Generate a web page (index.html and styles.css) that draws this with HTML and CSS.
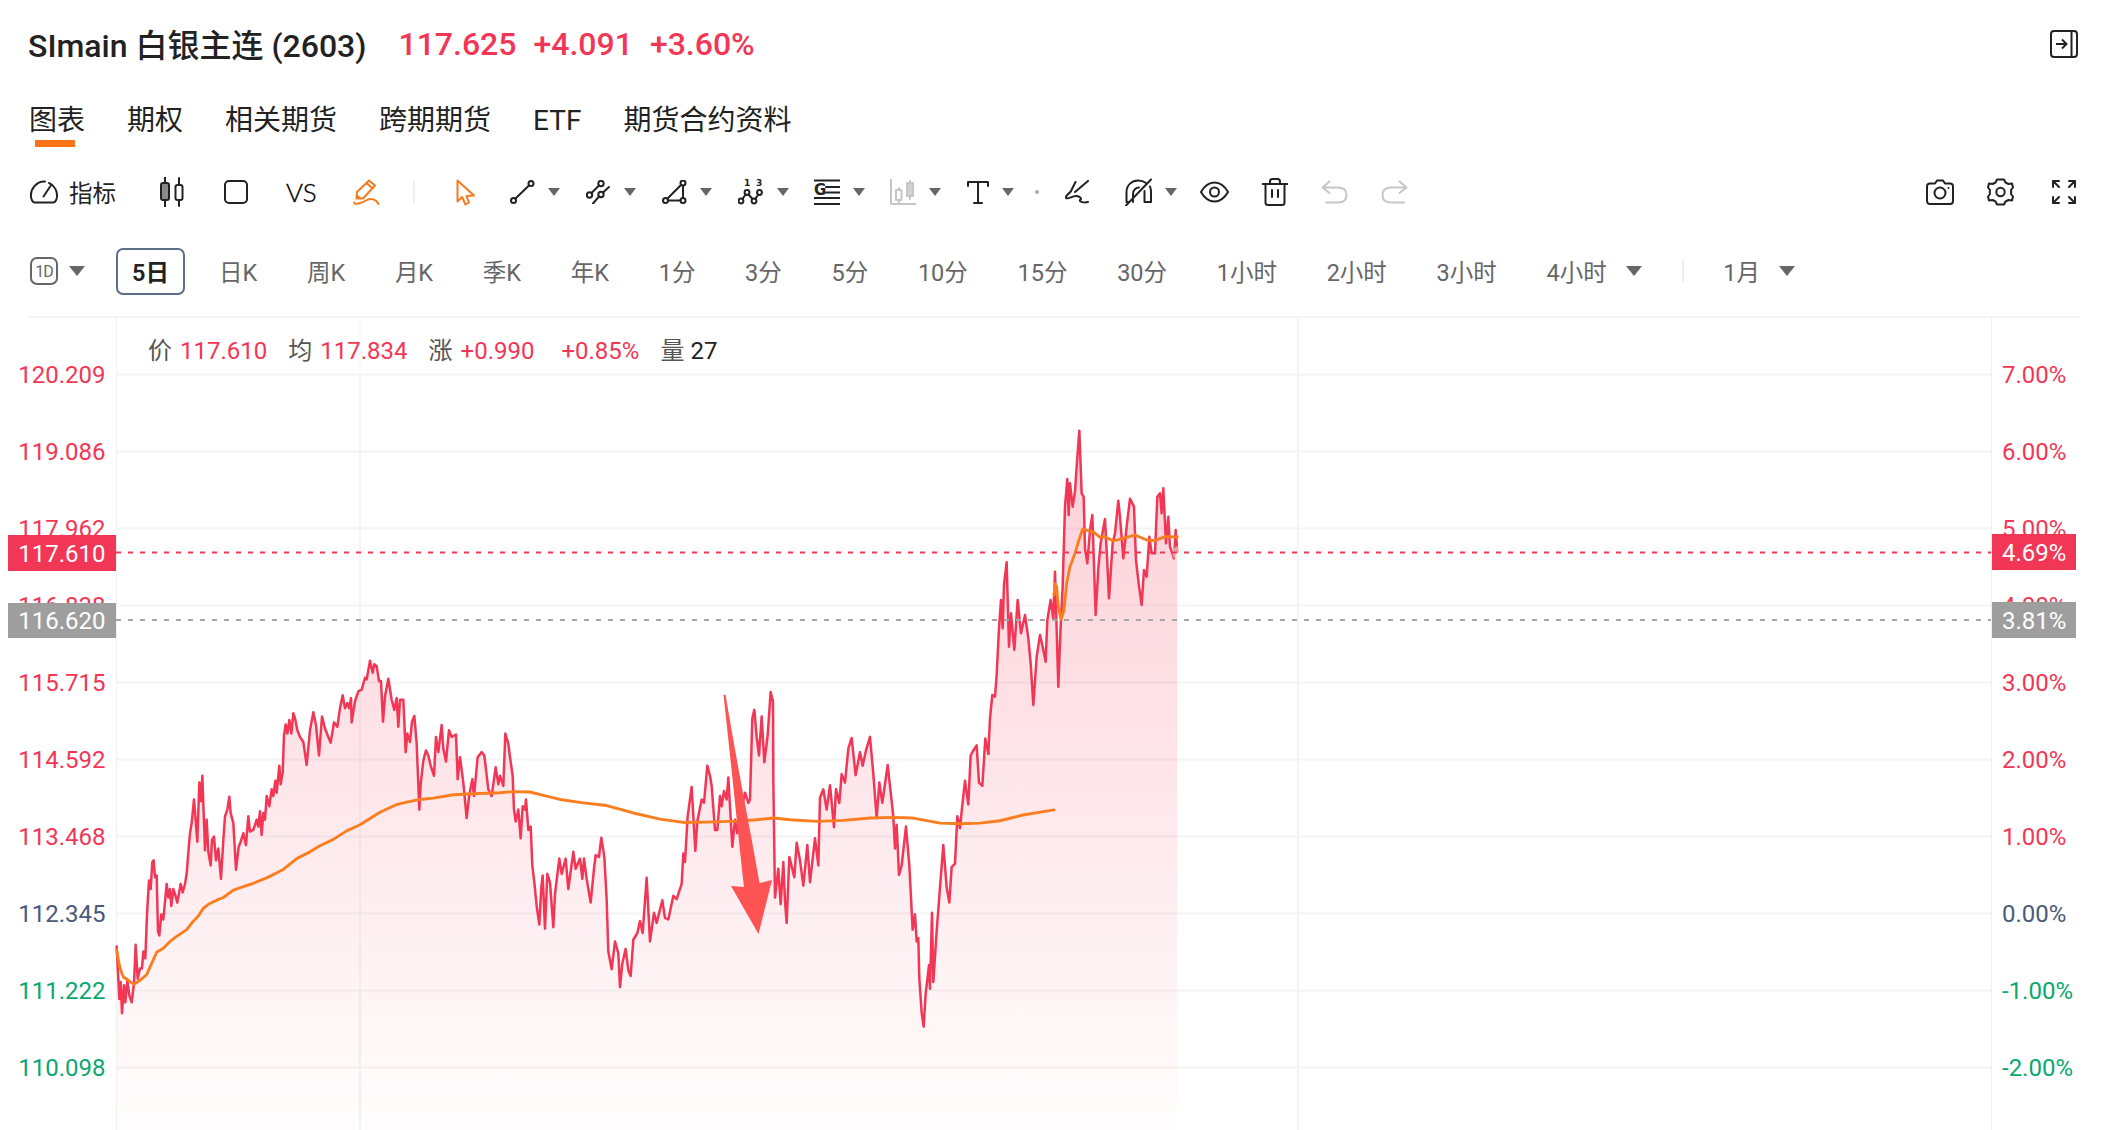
FILE: index.html
```html
<!DOCTYPE html>
<html lang="zh-CN">
<head>
<meta charset="utf-8">
<title>SImain 白银主连 (2603)</title>
<link rel="stylesheet" href="styles.css">
</head>
<body>
<div class="page">
  <header class="head">
    <h1 class="title">SImain 白银主连 (2603)</h1>
    <div class="quote"><span>117.625</span><span>+4.091</span><span>+3.60%</span></div>
    <svg class="exit" width="28" height="28" viewBox="0 0 28 28"><rect x="1" y="1" width="26" height="26" rx="3"/><path d="M21.500 1V27M6 14H16M12 9.500L16.500 14L12 18.500"/></svg>
  </header>

  <nav class="tabs">
    <a class="tab tab-on">图表</a><a class="tab">期权</a><a class="tab">相关期货</a><a class="tab">跨期期货</a><a class="tab">ETF</a><a class="tab">期货合约资料</a>
  </nav>

  <div class="tools">
    <svg class="ico g-1" width="30" height="24" viewBox="0 0 30 24"><path d="M6 22.500H24C26 22.500 27 21 27.800 18C29 11 25 5 20 3M6 22.500C4 22.500 3 21 2.200 18C0.500 9 8 1 16 1.500M14.500 16.500L21.500 6"/></svg>
    <span class="ind">指标</span>
    <svg class="ico g-candle" width="24" height="30" viewBox="0 0 24 30"><path d="M5 0V30M19 1V29"/><rect x="1" y="6" width="8" height="17" rx="2" fill="#8a8a8a"/><rect x="15.500" y="8" width="7" height="15" rx="2" fill="#fff"/></svg>
    <svg class="ico g-square" width="24" height="24" viewBox="0 0 24 24"><rect x="1" y="1" width="22" height="22" rx="4"/></svg>
    <span class="vs">VS</span>
    <svg class="ico ico-o g-pen" width="26" height="28" viewBox="0 0 26 28"><path d="M4 14L16 2.500L22 7.500L10 20.500L3.500 20.500ZM13.500 5L19.500 10.500M4 17.500L7.500 20.500M1 24.500C1 27.500 9 25 14 22C18 20 23 21 25.500 26"/></svg>
    <i class="sep"></i>
    <svg class="ico ico-o g-cursor" width="19" height="27" viewBox="0 0 19 27"><path d="M1.500 1.500V22.500L6 18L9.500 25.500L13 23.500L10.500 17L18 16.500Z"/></svg>

    <div class="dd dd-first"><svg class="ico" width="25" height="24" viewBox="0 0 25 24"><circle cx="21" cy="3.500" r="2.500"/><circle cx="3.500" cy="20.500" r="2.500"/><path d="M19 5.500L5.500 18.500"/></svg><i class="caret"></i></div>
    <div class="dd"><svg class="ico" width="25" height="24" viewBox="0 0 25 24"><circle cx="15" cy="3.500" r="2.700"/><circle cx="3.500" cy="15" r="2.700"/><circle cx="15" cy="14.500" r="2.700"/><path d="M13 5.500L5.500 13M7 23.500L13 16.500M17 12.500L23 7"/></svg><i class="caret"></i></div>
    <div class="dd"><svg class="ico" width="25" height="24" viewBox="0 0 25 24"><circle cx="3.500" cy="20.500" r="2.500"/><circle cx="21" cy="3" r="2.500"/><circle cx="21" cy="20.500" r="2.500"/><path d="M5.500 18.500L19 5M21 5.500V18M6 20.500H18.500"/></svg><i class="caret"></i></div>
    <div class="dd"><svg class="ico" width="26" height="26" viewBox="0 0 26 26"><text class="ico-num" x="6" y="7">1</text><text class="ico-num" x="18" y="7">3</text><circle cx="3" cy="22" r="2.400"/><circle cx="9" cy="13.500" r="2.400"/><circle cx="16" cy="22" r="2.400"/><circle cx="21.500" cy="13.500" r="2.400"/><path d="M4.500 20L7.500 15.500M10.500 15.500L14.500 20M17.300 20L20.300 15.500"/></svg><i class="caret"></i></div>
    <div class="dd"><svg class="ico" width="26" height="26" viewBox="0 0 26 26"><path d="M0 1.500H26M0 19H26M0 25H26M12 8H26M12 13.500H26"/><text class="ico-g" x="0" y="15.500">G</text></svg><i class="caret"></i></div>
    <div class="dd"><svg class="ico ico-l" width="26" height="26" viewBox="0 0 26 26"><path d="M1 0V25H26M9 9V24M20 2V20"/><rect x="6" y="11" width="5.500" height="10" fill="#fff"/><rect x="17" y="4" width="6" height="13" fill="#d0d0d0"/></svg><i class="caret"></i></div>
    <div class="dd dd-t"><svg class="ico" width="22" height="24" viewBox="0 0 22 24"><path d="M1 6V2H21V6M11 2V23M7 23H15"/></svg><i class="caret"></i></div>
    <i class="dot"></i>
    <svg class="ico g-scribble" width="25" height="24" viewBox="0 0 25 24"><path d="M23 1L10 12M10.500 2L6.500 10C6 13 0 15 1 18C3 20 8 15 12 16C16 17 17 19 15 20C14 22 19 23 23 22"/></svg>
    <div class="dd dd-h"><svg class="ico" width="27" height="28" viewBox="0 0 27 28"><path d="M1.500 24V14C1.500 7 7 2.500 13 2.500C16 2.500 19 3.500 21 5M8 24V16C8 12 11 9.500 14 9.500M19.500 13V24H26V13C26 11.500 25.500 10 25 8.500M1 27.500L26 1.500M1.500 24H3"/></svg><i class="caret"></i></div>
    <svg class="ico g-eye" width="29" height="22" viewBox="0 0 29 22"><path d="M1 11C5 4 9 1.500 14.500 1.500C20 1.500 24 4 28 11C24 18 20 20.500 14.500 20.500C9 20.500 5 18 1 11Z"/><circle cx="14.500" cy="11" r="4.500"/></svg>
    <svg class="ico g-trash" width="26" height="28" viewBox="0 0 26 28"><path d="M0.500 6H25.500M3.500 6V24.500C3.500 26 4.500 27 6 27H20C21.500 27 22.500 26 22.500 24.500V6M8 6V3.500C8 2 9 1 10.500 1H15.500C17 1 18 2 18 3.500V6M10 12V19M16 12V19"/></svg>
    <svg class="ico ico-l g-undo" width="27" height="24" viewBox="0 0 27 24"><path d="M8.500 1.500L1.500 7.500L8.500 13M1.500 7.500H17C22 7.500 25.500 10 25.500 15C25.500 20 22 22.500 17 22.500H5"/></svg>
    <svg class="ico ico-l g-redo" width="27" height="24" viewBox="0 0 27 24"><path d="M18.500 1.500L25.500 7.500L18.500 13M25.500 7.500H10C5 7.500 1.500 10 1.500 15C1.500 20 5 22.500 10 22.500H23"/></svg>
    <svg class="ico g-camera" width="28" height="26" viewBox="0 0 28 26"><path d="M9 4.500L11 1.500H17L19 4.500H24C25.800 4.500 27 5.700 27 7.500V22C27 23.800 25.800 25 24 25H4C2.200 25 1 23.800 1 22V7.500C1 5.700 2.200 4.500 4 4.500Z"/><circle cx="14" cy="14" r="5.500"/><circle class="solid" cx="22.500" cy="9" r="1"/></svg>
    <svg class="ico g-gear" width="27" height="28" viewBox="0 0 27 28"><path d="M10 1.500H17L18.500 4.500C19.500 5 20.500 5.500 21.500 6L25 5.500L26 9.500L24 12C24.200 13 24.200 15 24 16L26 18.500L25 22.500L21.500 22C20.500 22.500 19.500 23 18.500 23.500L17 26.500H10L8.500 23.500C7.500 23 6.500 22.500 5.500 22L2 22.500L1 18.500L3 16C2.800 15 2.800 13 3 12L1 9.500L2 5.500L5.500 6C6.500 5.500 7.500 5 8.500 4.500Z"/><circle cx="13.500" cy="14" r="4.200"/></svg>
    <svg class="ico g-full" width="24" height="24" viewBox="0 0 24 24"><path d="M1 7V1H7M1 1L7 7M17 1H23V7M23 1L17 7M1 17V23H7M1 23L7 17M23 17V23H17M23 23L17 17"/></svg>
  </div>

  <div class="periods">
    <div class="p-type"><svg class="ico-1d" width="28" height="28" viewBox="0 0 28 28"><rect x="1" y="1" width="26" height="26" rx="6"/><text x="14" y="19.500">1D</text></svg><i class="caret caret-t"></i></div>
    <a class="p p-on">5日</a>
    <a class="p">日K</a><a class="p">周K</a><a class="p">月K</a><a class="p">季K</a><a class="p">年K</a><a class="p">1分</a><a class="p">3分</a><a class="p">5分</a><a class="p">10分</a><a class="p">15分</a><a class="p">30分</a><a class="p">1小时</a><a class="p">2小时</a><a class="p">3小时</a>
    <a class="p p-dd">4小时<i class="caret caret-t"></i></a>
    <i class="sep sep-p"></i>
    <a class="p p-dd">1月<i class="caret caret-t"></i></a>
  </div>

  <section class="chart">
    <svg class="plot" width="2110" height="814" viewBox="0 316 2110 814">
      <defs>
        <linearGradient id="area" gradientUnits="userSpaceOnUse" x1="0" y1="420" x2="0" y2="1130">
          <stop offset="0" stop-color="#f23655" stop-opacity=".24"/>
          <stop offset="1" stop-color="#f23655" stop-opacity=".01"/>
        </linearGradient>
        <clipPath id="areaClip">
          <path transform="translate(0 600) scale(.33333 .33806)" d="M350 1568V1025L358 1180 362 1130 366 1222 372 1140 376 1190 382 1125 388 1170 395 1190 402 1135 407 1020 413 1120 420 1090 426 1090 430 1040 436 1060 441 930 447 830 452 855 457 775 461 770 465 820 470 815 474 980 478 992 484 930 490 945 500 840 505 880 510 855 514 905 520 855 525 870 532 895 542 840 548 865 555 840 560 810 566 735 570 690 575 660 582 590 592 715 598 540 603 595 607 520 612 660 615 740 620 650 625 745 632 785 636 710 642 700 648 770 655 735 663 825 670 710 675 640 682 620 688 582 692 630 700 660 708 798 716 730 722 715 730 690 738 725 745 640 750 685 760 680 770 650 775 670 780 625 785 695 790 630 795 650 800 580 808 610 815 560 820 580 826 535 830 570 838 490 842 545 848 510 852 400 857 368 862 395 868 355 874 395 880 335 885 350 892 385 900 405 910 420 920 488 930 385 940 332 948 370 957 460 966 345 975 380 985 405 992 422 1002 362 1012 375 1020 320 1028 282 1035 320 1042 305 1048 320 1053 290 1055 362 1065 300 1075 270 1085 265 1095 230 1100 235 1110 180 1118 215 1123 190 1130 195 1137 240 1143 240 1149 360 1155 285 1165 233 1175 295 1183 325 1190 290 1195 375 1200 295 1210 295 1217 450 1222 395 1230 420 1236 360 1243 343 1250 425 1258 620 1262 545 1270 475 1278 445 1285 460 1292 490 1302 520 1308 405 1315 450 1325 370 1330 440 1338 478 1347 385 1355 405 1368 398 1373 530 1380 465 1390 540 1400 645 1408 575 1417 530 1422 580 1433 465 1445 450 1453 460 1465 560 1475 580 1487 495 1495 545 1500 520 1510 550 1516 395 1525 425 1530 465 1538 520 1542 620 1547 655 1555 620 1562 705 1568 610 1575 620 1578 590 1585 680 1592 670 1597 785 1603 835 1610 905 1618 960 1624 850 1628 815 1635 972 1642 810 1650 835 1660 968 1665 870 1678 765 1685 810 1697 765 1705 855 1720 745 1727 795 1740 765 1747 825 1752 765 1760 825 1772 895 1782 795 1787 755 1797 760 1804 703 1813 760 1820 885 1825 1040 1835 1092 1845 1010 1855 1045 1860 1145 1867 1075 1877 1032 1885 1095 1892 1112 1900 1005 1912 985 1920 950 1928 985 1940 822 1950 1010 1962 925 1970 955 1987 888 1995 940 2005 945 2020 875 2030 885 2045 840 2050 750 2055 775 2063 640 2075 553 2086 742 2092 655 2105 590 2112 600 2122 490 2130 520 2135 550 2145 680 2152 680 2160 580 2165 610 2172 565 2180 590 2185 525 2197 730 2205 650 2212 690 2220 640 2235 570 2245 600 2250 590 2257 350 2263 325 2270 405 2277 460 2285 345 2293 480 2303 400 2312 272 2319 300 2320 530 2325 880 2335 795 2342 900 2350 775 2355 890 2360 955 2368 760 2383 820 2390 718 2400 770 2410 845 2422 725 2430 835 2445 705 2455 785 2460 585 2470 560 2480 620 2490 548 2502 672 2508 560 2518 600 2525 515 2535 540 2545 440 2555 408 2567 518 2580 450 2588 490 2598 445 2610 405 2620 515 2630 645 2638 540 2647 600 2663 488 2680 640 2685 735 2690 665 2697 813 2705 785 2718 670 2728 785 2738 975 2745 930 2750 1010 2755 1000 2758 1120 2765 1220 2771 1262 2777 1165 2787 1080 2790 1150 2796 925 2800 1130 2810 980 2820 850 2830 725 2840 850 2848 895 2855 790 2865 780 2872 640 2880 675 2885 625 2895 535 2905 605 2912 460 2920 445 2930 430 2937 540 2947 550 2956 410 2965 455L2970 1568Z"/>
          <path transform="translate(0 600) scale(.33333)" d="M2962 1590V480L2965 461 2970 355 2977 285 2985 290 2990 225 2997 85 3003 0 3008 85 3012 -45 3020 -113 3027 140 3033 40 3043 150 3053 0 3063 100 3075 45 3085 115 3092 190 3100 315 3110 170 3120 105 3128 140 3137 185 3142 60 3152 0 3160 55 3165 -85 3175 260 3182 80 3188 -40 3195 -280 3202 -363 3206 -255 3210 -350 3218 -280 3225 -325 3230 -400 3238 -508 3245 -320 3251 -310 3255 -155 3262 -110 3270 -210 3277 -255 3287 45 3295 -95 3302 -170 3315 -243 3322 -110 3327 -5 3338 -170 3345 -200 3355 -298 3360 -250 3370 -125 3380 -220 3390 -304 3402 -280 3408 -120 3416 -50 3425 15 3432 -90 3440 -70 3448 -190 3455 -140 3465 -140 3472 -310 3480 -320 3485 -260 3490 -335 3498 -170 3505 -250 3510 -160 3522 -125 3527 -210 3532 -145V1590Z"/>
        </clipPath>
      </defs>
      <path class="grid" d="M28 317H2080M116 374.500H1991M116 451.500H1991M116 528.500H1991M116 605.500H1991M116 682.500H1991M116 759.500H1991M116 836.500H1991M116 913.500H1991M116 990.500H1991M116 1067.500H1991M360 374V1130M1298 316V1130"/>
      <path class="grid-thin" d="M116.500 317V1130M1991.500 317V1130"/>
      <path class="grid-faint" d="M360 318V374"/>

      <g class="tick">
        <text class="up" x="105.500" y="383">120.209</text>
        <text class="up" x="105.500" y="460">119.086</text>
        <text class="up" x="105.500" y="537">117.962</text>
        <text class="up" x="105.500" y="614">116.838</text>
        <text class="up" x="105.500" y="691">115.715</text>
        <text class="up" x="105.500" y="768">114.592</text>
        <text class="up" x="105.500" y="845">113.468</text>
        <text class="flat" x="105.500" y="922">112.345</text>
        <text class="down" x="105.500" y="999">111.222</text>
        <text class="down" x="105.500" y="1076">110.098</text>
      </g>
      <g class="tick tick-r">
        <text class="up" x="2002" y="383">7.00%</text>
        <text class="up" x="2002" y="460">6.00%</text>
        <text class="up" x="2002" y="537">5.00%</text>
        <text class="up" x="2002" y="614">4.00%</text>
        <text class="up" x="2002" y="691">3.00%</text>
        <text class="up" x="2002" y="768">2.00%</text>
        <text class="up" x="2002" y="845">1.00%</text>
        <text class="flat" x="2002" y="922">0.00%</text>
        <text class="down" x="2002" y="999">-1.00%</text>
        <text class="down" x="2002" y="1076">-2.00%</text>
      </g>

      <rect class="area" x="116" y="316" width="1070" height="814" clip-path="url(#areaClip)"/>
      <g transform="translate(0 600) scale(.33333 .33806)">
        <path class="price" d="M350 1025L358 1180 362 1130 366 1222 372 1140 376 1190 382 1125 388 1170 395 1190 402 1135 407 1020 413 1120 420 1090 426 1090 430 1040 436 1060 441 930 447 830 452 855 457 775 461 770 465 820 470 815 474 980 478 992 484 930 490 945 500 840 505 880 510 855 514 905 520 855 525 870 532 895 542 840 548 865 555 840 560 810 566 735 570 690 575 660 582 590 592 715 598 540 603 595 607 520 612 660 615 740 620 650 625 745 632 785 636 710 642 700 648 770 655 735 663 825 670 710 675 640 682 620 688 582 692 630 700 660 708 798 716 730 722 715 730 690 738 725 745 640 750 685 760 680 770 650 775 670 780 625 785 695 790 630 795 650 800 580 808 610 815 560 820 580 826 535 830 570 838 490 842 545 848 510 852 400 857 368 862 395 868 355 874 395 880 335 885 350 892 385 900 405 910 420 920 488 930 385 940 332 948 370 957 460 966 345 975 380 985 405 992 422 1002 362 1012 375 1020 320 1028 282 1035 320 1042 305 1048 320 1053 290 1055 362 1065 300 1075 270 1085 265 1095 230 1100 235 1110 180 1118 215 1123 190 1130 195 1137 240 1143 240 1149 360 1155 285 1165 233 1175 295 1183 325 1190 290 1195 375 1200 295 1210 295 1217 450 1222 395 1230 420 1236 360 1243 343 1250 425 1258 620 1262 545 1270 475 1278 445 1285 460 1292 490 1302 520 1308 405 1315 450 1325 370 1330 440 1338 478 1347 385 1355 405 1368 398 1373 530 1380 465 1390 540 1400 645 1408 575 1417 530 1422 580 1433 465 1445 450 1453 460 1465 560 1475 580 1487 495 1495 545 1500 520 1510 550 1516 395 1525 425 1530 465 1538 520 1542 620 1547 655 1555 620 1562 705 1568 610 1575 620 1578 590 1585 680 1592 670 1597 785 1603 835 1610 905 1618 960 1624 850 1628 815 1635 972 1642 810 1650 835 1660 968 1665 870 1678 765 1685 810 1697 765 1705 855 1720 745 1727 795 1740 765 1747 825 1752 765 1760 825 1772 895 1782 795 1787 755 1797 760 1804 703 1813 760 1820 885 1825 1040 1835 1092 1845 1010 1855 1045 1860 1145 1867 1075 1877 1032 1885 1095 1892 1112 1900 1005 1912 985 1920 950 1928 985 1940 822 1950 1010 1962 925 1970 955 1987 888 1995 940 2005 945 2020 875 2030 885 2045 840 2050 750 2055 775 2063 640 2075 553 2086 742 2092 655 2105 590 2112 600 2122 490 2130 520 2135 550 2145 680 2152 680 2160 580 2165 610 2172 565 2180 590 2185 525 2197 730 2205 650 2212 690 2220 640 2235 570 2245 600 2250 590 2257 350 2263 325 2270 405 2277 460 2285 345 2293 480 2303 400 2312 272 2319 300 2320 530 2325 880 2335 795 2342 900 2350 775 2355 890 2360 955 2368 760 2383 820 2390 718 2400 770 2410 845 2422 725 2430 835 2445 705 2455 785 2460 585 2470 560 2480 620 2490 548 2502 672 2508 560 2518 600 2525 515 2535 540 2545 440 2555 408 2567 518 2580 450 2588 490 2598 445 2610 405 2620 515 2630 645 2638 540 2647 600 2663 488 2680 640 2685 735 2690 665 2697 813 2705 785 2718 670 2728 785 2738 975 2745 930 2750 1010 2755 1000 2758 1120 2765 1220 2771 1262 2777 1165 2787 1080 2790 1150 2796 925 2800 1130 2810 980 2820 850 2830 725 2840 850 2848 895 2855 790 2865 780 2872 640 2880 675 2885 625 2895 535 2905 605 2912 460 2920 445 2930 430 2937 540 2947 550 2956 410 2965 455"/>
        <path class="avg" d="M350 1035C356 1075 362 1100 370 1115L385 1125 402 1137 420 1125 440 1108 455 1075 470 1042 490 1030 510 1010 530 995 560 975 580 950 595 935 610 912 625 900 650 888 670 880 700 858 730 848 760 838 800 822 850 797 890 765 930 745 960 727 1000 708 1040 683 1080 665 1140 628 1190 605 1220 598 1260 590 1300 586 1360 576 1420 573 1500 570 1540 567 1590 568 1630 578 1680 590 1750 600 1820 608 1900 630 1980 648 2050 658 2120 657 2210 654 2270 650 2320 645 2370 650 2450 655 2530 652 2610 645 2680 643 2740 645 2820 660 2880 662 2940 660 3000 653 3069 636 3162 621"/>
      </g>
      <g transform="translate(0 600) scale(.33333)">
        <path class="price" d="M2965 461L2970 355 2977 285 2985 290 2990 225 2997 85 3003 0 3008 85 3012 -45 3020 -113 3027 140 3033 40 3043 150 3053 0 3063 100 3075 45 3085 115 3092 190 3100 315 3110 170 3120 105 3128 140 3137 185 3142 60 3152 0 3160 55 3165 -85 3175 260 3182 80 3188 -40 3195 -280 3202 -363 3206 -255 3210 -350 3218 -280 3225 -325 3230 -400 3238 -508 3245 -320 3251 -310 3255 -155 3262 -110 3270 -210 3277 -255 3287 45 3295 -95 3302 -170 3315 -243 3322 -110 3327 -5 3338 -170 3345 -200 3355 -298 3360 -250 3370 -125 3380 -220 3390 -304 3402 -280 3408 -120 3416 -50 3425 15 3432 -90 3440 -70 3448 -190 3455 -140 3465 -140 3472 -310 3480 -320 3485 -260 3490 -335 3498 -170 3505 -250 3510 -160 3522 -125 3527 -210 3532 -145"/>
        <path class="avg" d="M3162 -15L3165 -50 3170 -40 3175 20 3183 58 3192 30 3200 -50 3210 -100 3225 -140 3237 -180 3248 -213 3265 -208 3282 -203 3300 -188 3315 -190 3340 -177 3370 -185 3405 -195 3440 -180 3465 -178 3495 -190 3532 -189"/>
      </g>

      <circle class="pulse" cx="1179" cy="553" r="7"/>
      <path class="arrow" d="M723.500 695L725.500 694.500C733 740 743 793 751 836L759.500 883L772 880L758.500 934L731 886L744 887C738 833 732 772 723.500 695Z"/>

      <path class="dash-red" d="M116 552.500H1991"/>
      <path class="dash-gray" d="M116 620H1991"/>
      <rect class="tag-red" x="8" y="535" width="108" height="36"/>
      <rect class="tag-gray" x="8" y="603" width="108" height="35"/>
      <rect class="tag-red" x="1992" y="534" width="84" height="36"/>
      <rect class="tag-gray" x="1992" y="602" width="84" height="36"/>
      <g class="tick tick-tag">
        <text class="end" x="105.500" y="561.500">117.610</text>
        <text class="end" x="105.500" y="629">116.620</text>
        <text x="2002" y="561">4.69%</text>
        <text x="2002" y="629">3.81%</text>
      </g>
    </svg>
    <div class="legend">
      <span class="lg"><b>价</b><em>117.610</em></span>
      <span class="lg"><b>均</b><em>117.834</em></span>
      <span class="lg"><b>涨</b><em>+0.990</em></span>
      <span class="lg lg-pct"><em>+0.85%</em></span>
      <span class="lg"><b>量</b><em class="vol">27</em></span>
    </div>
  </section>
</div>
</body>
</html>
```

FILE: styles.css
```css
* { box-sizing: border-box; }
html, body { margin: 0; padding: 0; background: #fff; }
.page {
  width: 2110px;
  height: 1130px;
  overflow: hidden;
  font-family: Roboto, "Noto Sans CJK SC", sans-serif;
  color: #222;
}

/* header */
.head { display: flex; align-items: center; height: 88px; padding: 0 32px 0 28px; }
.title { margin: 0 0 2px; font-size: 32px; font-weight: 500; color: #222; white-space: nowrap; }
.quote { display: flex; gap: 17px; margin-left: 32px; font-size: 32px; font-weight: 500; color: #f23655; }
.exit { margin-left: auto; fill: none; stroke: #222; stroke-width: 2; }

/* tabs */
.tabs { display: flex; gap: 42px; height: 66px; padding: 0 0 0 29px; align-items: center; }
.tab { position: relative; font-size: 28px; color: #222; line-height: 40px; white-space: nowrap; }
.tab-on::after {
  content: "";
  position: absolute;
  left: 6px;
  top: 39px;
  width: 40px;
  height: 7px;
  background: #f97316;
}

/* toolbar */
.tools { display: flex; align-items: center; height: 76px; padding: 0 34px 0 29px; }
.ico { flex: none; fill: none; stroke: #222; stroke-width: 2; stroke-linecap: round; stroke-linejoin: round; }
.ico .solid { fill: #222; stroke: none; }
.ico-o { stroke: #f47b20; }
.ico-l { stroke: #c6c6c6; }
.ico-num { font: 700 9px "DejaVu Sans", sans-serif; fill: #222; stroke: none; }
.ico-g { font: 700 15px "DejaVu Sans", sans-serif; fill: #222; stroke: none; }
.ind { margin-left: 10px; font-size: 23.500px; white-space: nowrap; }
.vs { margin-left: 38px; font: 300 26px Lato, sans-serif; color: #000; width: 27px; -webkit-text-stroke: .3px #000; }
.sep { flex: none; width: 2px; height: 22px; background: #eee; }
.g-candle { margin-left: 44px; }
.g-square { margin-left: 40px; }
.g-pen { margin-left: 40px; }
.tools .sep { margin-left: 34px; }
.g-cursor { margin-left: 41px; }
.dd { flex: none; display: flex; align-items: center; gap: 13px; width: 76px; }
.dd-first { margin-left: 35px; }
.dd-t { margin-left: 1px; width: 68px; }
.caret {
  flex: none;
  width: 0;
  height: 0;
  border-left: 6px solid transparent;
  border-right: 6px solid transparent;
  border-top: 8px solid #666;
}
.dot { flex: none; width: 4px; height: 4px; border-radius: 50%; background: #aaa; }
.g-scribble { margin-left: 26px; }
.dd-h { margin-left: 35px; width: 75px; }
.g-trash { margin-left: 33px; }
.g-undo { margin-left: 33px; }
.g-redo { margin-left: 33px; }
.g-camera { margin-left: auto; }
.g-gear { margin-left: 33px; }
.g-full { margin-left: 38px; }

/* period row */
.periods { display: flex; align-items: center; height: 82px; padding-left: 30px; }
.p-type { display: flex; align-items: center; gap: 11px; width: 86px; }
.ico-1d { flex: none; fill: none; stroke: #666; stroke-width: 2; }
.ico-1d text { font: 400 16px Roboto, sans-serif; letter-spacing: -1px; fill: #666; stroke: none; text-anchor: middle; }
.caret-t { border-left-width: 8px; border-right-width: 8px; border-top-width: 10px; }
.p { font-size: 23.500px; color: #666; white-space: nowrap; margin-right: 49.700px; }
.p-on {
  display: flex;
  align-items: center;
  justify-content: center;
  width: 69px;
  height: 47px;
  margin-right: 34px;
  border: 2px solid #5d6e88;
  border-radius: 7px;
  color: #222;
  font-weight: 600;
}
.p-dd { display: flex; align-items: center; gap: 19px; }
.sep-p { margin-left: -9px; margin-right: 39px; }

/* chart */
.chart { position: relative; margin-top: 4px; height: 814px; }
.plot { position: absolute; left: 0; top: 0; display: block; }
.grid { fill: none; stroke: #f4f4f5; stroke-width: 2; }
.grid-thin { fill: none; stroke: #f1f1f2; stroke-width: 1; }
.grid-faint { fill: none; stroke: #fafafa; stroke-width: 2; }
.tick text { font: 400 24px Roboto, sans-serif; text-anchor: end; }
.tick-r text { text-anchor: start; }
.up { fill: #f23655; }
.flat { fill: #4a5a78; }
.down { fill: #0aa86f; }
.tick-tag text { fill: #fff; text-anchor: start; }
.tick-tag .end { text-anchor: end; }
.area { fill: url(#area); stroke: none; }
.price { fill: none; stroke: #f23655; stroke-width: 7.500; stroke-linejoin: round; stroke-linecap: round; }
.avg { fill: none; stroke: #fb7d1e; stroke-width: 8.500; stroke-linejoin: round; stroke-linecap: round; }
.pulse { fill: #e4f6ef; opacity: .5; }
.arrow { fill: #fd5353; }
.dash-red { fill: none; stroke: #f23655; stroke-width: 2; stroke-dasharray: 5 7; }
.dash-gray { fill: none; stroke: #a6a6a6; stroke-width: 2; stroke-dasharray: 5 7; }
.tag-red { fill: #f23655; }
.tag-gray { fill: #9e9e9e; }

.legend {
  position: absolute;
  left: 148px;
  top: 15px;
  display: flex;
  gap: 21px;
  font: 400 24px Roboto, "Noto Sans CJK SC", sans-serif;
  line-height: 40px;
  white-space: nowrap;
}
.lg { display: flex; gap: 8px; }
.lg-pct { margin-left: 6px; }
.lg b { font-weight: 400; color: #555; }
.lg em { font-style: normal; color: #f23655; }
.lg .vol { margin-left: -2px; color: #222; }
```
